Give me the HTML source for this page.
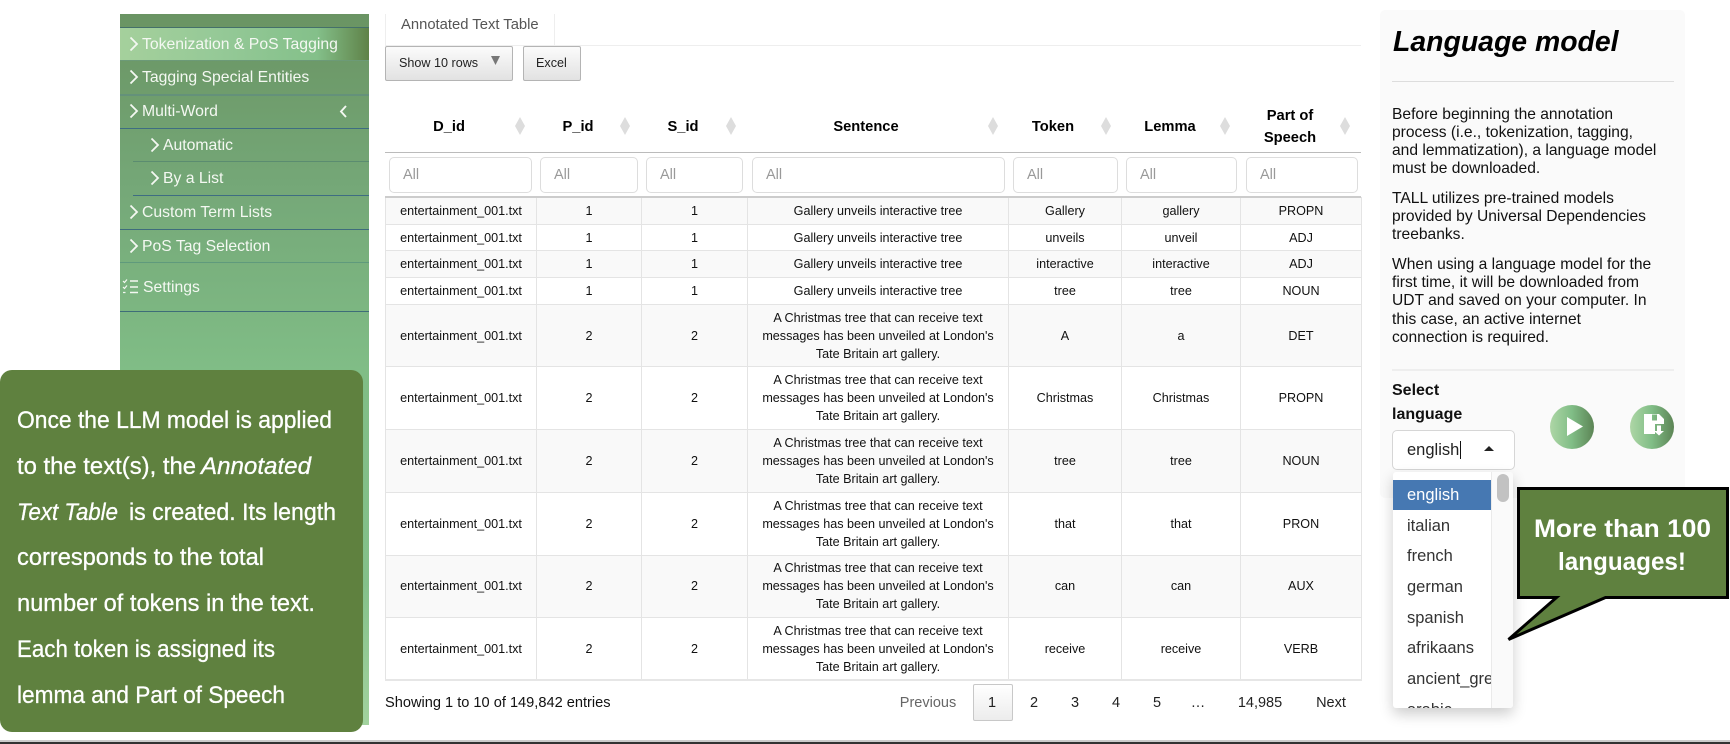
<!DOCTYPE html>
<html lang="en"><head><meta charset="utf-8"><title>Language model</title>
<style>
html,body{margin:0;padding:0;background:#fff}
body{position:relative;width:1730px;height:744px;overflow:hidden;font-family:"Liberation Sans",Arial,sans-serif;color:#111}
.a{position:absolute;white-space:nowrap}
#side{position:absolute;left:120px;top:14px;width:249px;height:711px;background:linear-gradient(180deg,#6a9463 0%,#75a878 25%,#80bd86 50%,#84c08a 80%,#a2d29e 100%)}
.ln{position:absolute;left:120px;width:249px;height:1px}
.it{position:absolute;left:142px;font-size:15.75px;line-height:20px;white-space:nowrap;color:#f4f8f2}
table{position:absolute;left:385px;top:197px;width:976px;border-collapse:collapse;table-layout:fixed;font-size:12.6px;line-height:18px;text-align:center;color:#111}
td{border:1px solid #e4e4e4;padding:0;vertical-align:middle}
tr.s{height:26.7px}tr.t{height:62.7px}
tr:nth-child(odd){background:#f9f9f9}
table{border-bottom:2px solid #e6e6e6}
td.c{padding:0 10px}
.f{position:absolute;top:157px;height:34px;border:1px solid #ddd;border-radius:5px;background:#fff;color:#999;font-size:14.5px;line-height:34px;padding-left:13px;box-sizing:content-box}
.d{position:absolute;top:117px;width:10px;height:18px;background:#ddd;clip-path:polygon(50% 0,100% 50%,50% 100%,0 50%)}
.b{position:absolute;top:46px;height:33px;box-sizing:content-box;border:1px solid #b4b4b4;border-radius:2px;background:linear-gradient(180deg,#fbfbfb,#e2e2e2);font-size:12.6px;line-height:32px;color:#222;white-space:nowrap}
.pg{position:absolute;top:693px;font-size:14.5px;line-height:20px;transform:translateX(-50%);color:#222}
p{position:absolute;left:1392px;margin:0;font-size:15.6px;line-height:18px;color:#111;white-space:nowrap}
.o{position:absolute;left:1407px;font-size:16.5px;line-height:20px;color:#333}
.h{position:absolute;transform:translateX(-50%);white-space:nowrap}
</style></head><body>

<div id="side"></div>
<div style="position:absolute;left:120px;top:28px;width:249px;height:32px;background:linear-gradient(90deg,#a5d09c 0%,#95c997 40%,#84c08a 79%,#5f8248 100%)"></div>
<div class="ln" style="top:27px;background:#44706a"></div>
<div class="ln" style="top:60px;background:#6c9a78"></div>
<div class="ln" style="top:94px;height:2px;background:#64917a"></div>
<div class="ln" style="top:128px;background:#3e6d82"></div>
<div class="ln" style="top:161px;left:133px;width:236px;background:#5b8c70"></div>
<div class="ln" style="top:195px;left:133px;width:236px;background:#3e6d82"></div>
<div class="ln" style="top:229px;background:#3e6d7c"></div>
<div class="ln" style="top:262px;background:#5f9a7c"></div>
<div class="ln" style="top:311px;background:#3e6d78"></div>

<div class="it" style="top:35px">Tokenization &amp; PoS Tagging</div>
<div class="it" style="top:68px">Tagging Special Entities</div>
<div class="it" style="top:102px">Multi-Word</div>
<div class="it" style="top:136px;left:163px">Automatic</div>
<div class="it" style="top:169px;left:163px">By a List</div>
<div class="it" style="top:203px">Custom Term Lists</div>
<div class="it" style="top:237px">PoS Tag Selection</div>
<div class="it" style="top:278px;left:143px">Settings</div>

<div class="a" style="left:401px;top:17px;font-size:14.8px;line-height:17px;color:#555">Annotated Text Table</div>
<div style="position:absolute;left:385px;top:14px;width:1px;height:32px;background:#eee"></div>
<div style="position:absolute;left:554px;top:14px;width:1px;height:31px;background:#eee"></div>
<div style="position:absolute;left:385px;top:45px;width:976px;height:1px;background:#eee"></div>

<div class="b" style="left:385px;width:113px;padding-left:13px">Show 10 rows</div>
<div class="b" style="left:523px;width:44px;padding-left:12px">Excel</div>

<div class="a" style="left:0;top:0;font-size:14.7px;font-weight:bold;color:#000;line-height:21px">
<span class="h" style="left:449px;top:117px">D_id</span>
<span class="h" style="left:578px;top:117px">P_id</span>
<span class="h" style="left:683px;top:117px">S_id</span>
<span class="h" style="left:866px;top:117px">Sentence</span>
<span class="h" style="left:1053px;top:117px">Token</span>
<span class="h" style="left:1170px;top:117px">Lemma</span>
<span class="h" style="left:1290px;top:106px">Part of</span>
<span class="h" style="left:1290px;top:127.5px">Speech</span>
</div>
<div class="d" style="left:515px"></div><div class="d" style="left:620px"></div><div class="d" style="left:726px"></div>
<div class="d" style="left:988px"></div><div class="d" style="left:1101px"></div><div class="d" style="left:1220px"></div><div class="d" style="left:1340px"></div>
<div style="position:absolute;left:385px;top:152px;width:976px;height:1px;background:#bbb"></div>

<div class="f" style="left:389px;width:128px">All</div>
<div class="f" style="left:540px;width:83px">All</div>
<div class="f" style="left:646px;width:82px">All</div>
<div class="f" style="left:752px;width:238px">All</div>
<div class="f" style="left:1013px;width:90px">All</div>
<div class="f" style="left:1126px;width:96px">All</div>
<div class="f" style="left:1246px;width:97px">All</div>

<table>
<colgroup><col style="width:151px"><col style="width:105px"><col style="width:106px"><col style="width:261px"><col style="width:113px"><col style="width:119px"><col style="width:121px"></colgroup>
<tr class="s"><td>entertainment_001.txt</td><td>1</td><td>1</td><td>Gallery unveils interactive tree</td><td>Gallery</td><td>gallery</td><td>PROPN</td></tr>
<tr class="s"><td>entertainment_001.txt</td><td>1</td><td>1</td><td>Gallery unveils interactive tree</td><td>unveils</td><td>unveil</td><td>ADJ</td></tr>
<tr class="s"><td>entertainment_001.txt</td><td>1</td><td>1</td><td>Gallery unveils interactive tree</td><td>interactive</td><td>interactive</td><td>ADJ</td></tr>
<tr class="s"><td>entertainment_001.txt</td><td>1</td><td>1</td><td>Gallery unveils interactive tree</td><td>tree</td><td>tree</td><td>NOUN</td></tr>
<tr class="t"><td>entertainment_001.txt</td><td>2</td><td>2</td><td class="c">A Christmas tree that can receive text messages has been unveiled at London's Tate Britain art gallery.</td><td>A</td><td>a</td><td>DET</td></tr>
<tr class="t"><td>entertainment_001.txt</td><td>2</td><td>2</td><td class="c">A Christmas tree that can receive text messages has been unveiled at London's Tate Britain art gallery.</td><td>Christmas</td><td>Christmas</td><td>PROPN</td></tr>
<tr class="t"><td>entertainment_001.txt</td><td>2</td><td>2</td><td class="c">A Christmas tree that can receive text messages has been unveiled at London's Tate Britain art gallery.</td><td>tree</td><td>tree</td><td>NOUN</td></tr>
<tr class="t"><td>entertainment_001.txt</td><td>2</td><td>2</td><td class="c">A Christmas tree that can receive text messages has been unveiled at London's Tate Britain art gallery.</td><td>that</td><td>that</td><td>PRON</td></tr>
<tr class="t"><td>entertainment_001.txt</td><td>2</td><td>2</td><td class="c">A Christmas tree that can receive text messages has been unveiled at London's Tate Britain art gallery.</td><td>can</td><td>can</td><td>AUX</td></tr>
<tr class="t"><td>entertainment_001.txt</td><td>2</td><td>2</td><td class="c">A Christmas tree that can receive text messages has been unveiled at London's Tate Britain art gallery.</td><td>receive</td><td>receive</td><td>VERB</td></tr>
</table>
<div style="position:absolute;left:385px;top:196px;width:976px;height:2px;background:#ccc"></div>

<div class="a" style="left:385px;top:693px;font-size:14.6px;line-height:20px;color:#111">Showing 1 to 10 of 149,842 entries</div>
<div style="position:absolute;left:973px;top:684px;width:38px;height:35px;border:1px solid #c8c8c8;border-radius:2px;background:linear-gradient(180deg,#fff,#ececec)"></div>
<div class="pg" style="left:928px;color:#666">Previous</div>
<div class="pg" style="left:992px">1</div><div class="pg" style="left:1034px">2</div><div class="pg" style="left:1075px">3</div><div class="pg" style="left:1116px">4</div><div class="pg" style="left:1157px">5</div><div class="pg" style="left:1198px">…</div><div class="pg" style="left:1260px">14,985</div><div class="pg" style="left:1331px">Next</div>

<!-- Right panel -->
<div style="position:absolute;left:1380px;top:10px;width:305px;height:488px;background:#fafafa;border-radius:5px"></div>
<div class="a" style="left:1393px;top:26px;font-size:28.4px;line-height:32px;font-weight:bold;font-style:italic;color:#000">Language model</div>
<div style="position:absolute;left:1392px;top:81px;width:282px;height:1px;background:#ddd"></div>
<p style="top:106px">Before beginning the annotation<br>process (i.e., tokenization, tagging,<br>and lemmatization), a language model<br>must be downloaded.</p>
<p style="top:190px">TALL utilizes pre-trained models<br>provided by Universal Dependencies<br>treebanks.</p>
<p style="top:256px;line-height:18.2px">When using a language model for the<br>first time, it will be downloaded from<br>UDT and saved on your computer. In<br>this case, an active internet<br>connection is required.</p>
<div style="position:absolute;left:1392px;top:369px;width:282px;height:2px;background:#eee"></div>
<div class="a" style="left:1392px;top:379px;font-size:16px;line-height:23.5px;font-weight:bold;color:#111">Select<br>language</div>

<div style="position:absolute;left:1392px;top:430px;width:121px;height:38px;background:#fff;border:1px solid #d6d6d6;border-radius:5px"></div>
<div class="o" style="color:#222;top:440px">english</div>
<div style="position:absolute;left:1460px;top:441px;width:1px;height:18px;background:#111"></div>
<div style="position:absolute;left:1484px;top:446px;width:0;height:0;border-left:5px solid transparent;border-right:5px solid transparent;border-bottom:5px solid #222"></div>

<div style="position:absolute;left:1393px;top:472px;width:120px;height:236px;background:#fff;border-radius:3px;box-shadow:0 6px 14px rgba(0,0,0,.2);overflow:hidden">
  <div style="position:absolute;left:98px;top:0;width:22px;height:236px;background:#fafafa;border-left:1px solid #eaeaea"></div>
  <div style="position:absolute;left:104px;top:2px;width:12px;height:28px;background:#c2c2c2;border-radius:6px"></div>
  <div style="position:absolute;left:0;top:8px;width:98px;height:30px;background:#4678b2"></div>
  <div style="position:absolute;left:0;top:0;width:98px;height:236px;overflow:hidden">
    <div class="o" style="left:14px;top:13px;color:#fff">english</div>
    <div class="o" style="left:14px;top:44px">italian</div>
    <div class="o" style="left:14px;top:74px">french</div>
    <div class="o" style="left:14px;top:105px">german</div>
    <div class="o" style="left:14px;top:136px">spanish</div>
    <div class="o" style="left:14px;top:166px">afrikaans</div>
    <div class="o" style="left:14px;top:197px">ancient_greek</div>
    <div class="o" style="left:14px;top:228px">arabic</div>
  </div>
</div>

<!-- Callouts + icons -->
<svg width="1730" height="744" viewBox="0 0 1730 744" style="position:absolute;left:0;top:0" font-family="'Liberation Sans',Arial,sans-serif">
<defs>
<linearGradient id="g" x1="0" x2="1" y1="0" y2="0"><stop offset="0" stop-color="#aed6a6"/><stop offset=".5" stop-color="#80bd86"/><stop offset="1" stop-color="#5c8455"/></linearGradient>
</defs>
<g fill="none" stroke="#f4f8f2" stroke-width="1.8">
<path d="M130.5 37.5l6.5 6.5-6.5 6.5"/><path d="M130.5 70.5l6.5 6.5-6.5 6.5"/><path d="M130.5 104.5l6.5 6.5-6.5 6.5"/>
<path d="M151.5 138.5l6.5 6.5-6.5 6.5"/><path d="M151.5 171.5l6.5 6.5-6.5 6.5"/>
<path d="M130.5 205.5l6.5 6.5-6.5 6.5"/><path d="M130.5 239.5l6.5 6.5-6.5 6.5"/>
<path d="M346 106l-5 5.5 5 5.5" stroke-width="1.9"/>
<path d="M130 281h8M130 287h8M130 292.5h8" stroke-width="1.6"/>
<path d="M123 281l1.5 1.5 2.5-3M123 287l1.5 1.5 2.5-3M123 292.5h2.5" stroke-width="1.2"/>
</g>

<circle cx="1572" cy="427" r="22" fill="url(#g)"/>
<path d="M1567 417l16 9.5-16 9.5z" fill="#fff"/>
<circle cx="1652" cy="427" r="22" fill="url(#g)"/>
<path d="M1644 414H1659L1664 419V424H1655V434H1644zM1652 414.5h5v6h-5z" fill="#fff" fill-rule="evenodd"/>
<path d="M1657 425.5h4v5.5h3l-5 4.5-5-4.5h3z" fill="#fff"/>

<path d="M1518.5 488.5h209v109h-122l-97 42 48-42h-38z" fill="#5f813f" stroke="#000" stroke-width="3" stroke-linejoin="miter"/>
<g fill="#fff" font-weight="bold" font-size="25">
<text x="1534" y="537" textLength="177" lengthAdjust="spacingAndGlyphs">More than 100</text>
<text x="1558" y="570" textLength="128" lengthAdjust="spacingAndGlyphs">languages!</text>
</g>

<path d="M12 370H351a12 12 0 0 1 12 12V720a12 12 0 0 1-12 12H12a12 12 0 0 1-12-12V382a12 12 0 0 1 12-12z" fill="#5f813f"/>
<g fill="#fff" stroke="#fff" stroke-width=".3" font-size="24">
<text x="17" y="428" textLength="315" lengthAdjust="spacingAndGlyphs">Once the LLM model is applied</text>
<text x="17" y="474" textLength="179" lengthAdjust="spacingAndGlyphs">to the text(s), the</text>
<text x="201" y="474" textLength="110" lengthAdjust="spacingAndGlyphs" font-style="italic">Annotated</text>
<text x="17" y="520" textLength="101" lengthAdjust="spacingAndGlyphs" font-style="italic">Text Table</text>
<text x="129" y="520" textLength="207" lengthAdjust="spacingAndGlyphs">is created. Its length</text>
<text x="17" y="565" textLength="247" lengthAdjust="spacingAndGlyphs">corresponds to the total</text>
<text x="17" y="611" textLength="298" lengthAdjust="spacingAndGlyphs">number of tokens in the text.</text>
<text x="17" y="657" textLength="258" lengthAdjust="spacingAndGlyphs">Each token is assigned its</text>
<text x="17" y="703" textLength="268" lengthAdjust="spacingAndGlyphs">lemma and Part of Speech</text>
</g>
<path d="M491 56h9l-4.5 9z" fill="#777"/>
</svg>

<div style="position:absolute;left:0;top:740px;width:1730px;height:2px;background:#ccc"></div>
<div style="position:absolute;left:0;top:742px;width:1730px;height:2px;background:#333"></div>
</body></html>
